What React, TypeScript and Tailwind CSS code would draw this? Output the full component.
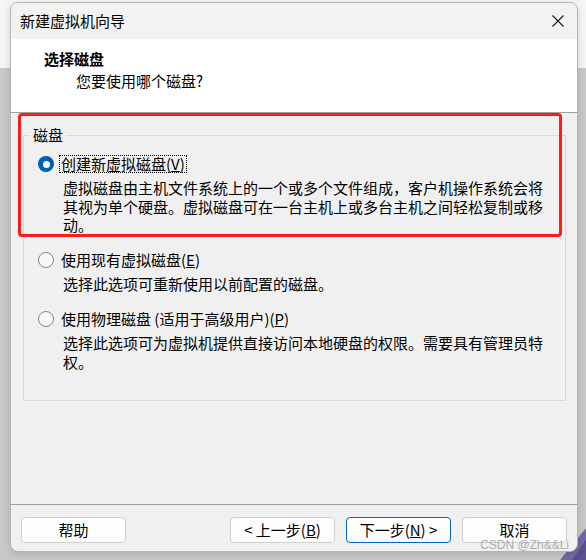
const font = "font-['Noto_Sans_CJK_SC',sans-serif]";

function Radio({ checked }: { checked?: boolean }) {
  if (checked) {
    return (
      <span className="flex h-[16px] w-[16px] shrink-0 items-center justify-center rounded-full bg-[#005fb8]">
        <span className="h-[7px] w-[7px] rounded-full bg-white" />
      </span>
    );
  }
  return <span className="h-[16px] w-[16px] shrink-0 rounded-full border border-[#858585] bg-[#f8f8f8]" />;
}

type OptionProps = {
  checked?: boolean;
  label: string;
  hotkey: string;
  desc: string;
  focused?: boolean;
  className?: string;
};

function Option({ checked, label, hotkey, desc, focused, className }: OptionProps) {
  return (
    <div className={className}>
      <div className="flex h-[18px] items-center gap-[5px]">
        <Radio checked={checked} />
        <span
          className={`px-[1px] leading-[16px] ${
            focused ? "border border-dotted border-black" : "border border-transparent"
          }`}
        >
          {label}(<u>{hotkey}</u>)
        </span>
      </div>
      <p className="ml-[25px] mt-[6px] w-[485px] leading-[18.5px]">{desc}</p>
    </div>
  );
}

function Button({ children, primary }: { children: React.ReactNode; primary?: boolean }) {
  return (
    <button
      className={`h-[26px] w-[105px] rounded-[4px] border bg-[#fdfdfd] text-[15px] leading-[24px] text-black ${
        primary ? "border-[#0067c0]" : "border-[#d0d0d0]"
      }`}
    >
      {children}
    </button>
  );
}

export default function App() {
  return (
    <div className={`relative flex h-[560px] w-[586px] flex-col overflow-hidden ${font} text-[15px] text-black`}>
      {/* desktop behind the dialog */}
      <div className="h-[68px] bg-[#f6f6f6]" />
      <div className="flex-1 bg-[#c9c9c9]" />
      <svg className="absolute bottom-0 right-0" width="40" height="40" viewBox="0 0 40 40">
        <polygon points="40,8 40,40 14,40" fill="#7467a6" />
        <polygon points="40,20 40,40 26,40" fill="#5c4f92" />
      </svg>

      {/* dialog window */}
      <div className="absolute left-[10px] top-[2px] flex h-[550px] w-[568px] flex-col overflow-hidden rounded-[8px] border border-[#b4b4b4] bg-[#f0f0f0] shadow-[0_2px_8px_rgba(0,0,0,0.15)]">
        <div className="flex h-[36px] items-center justify-between bg-[#f3f2f0] pl-[9px] pr-[13px]">
          <span className="leading-[20px]">新建虚拟机向导</span>
          <svg width="12" height="12" viewBox="0 0 12 12">
            <path d="M0.5 0.5 L11.5 11.5 M11.5 0.5 L0.5 11.5" stroke="#1a1a1a" strokeWidth="1.1" />
          </svg>
        </div>

        <div className="h-[74px] border-b border-[#a0a0a0] bg-white pl-[33px] pt-[10px]">
          <div className="font-bold leading-[20px]">选择磁盘</div>
          <div className="ml-[32px] mt-[2px] leading-[20px]">您要使用哪个磁盘?</div>
        </div>

        <div className="flex-1 pl-[12px] pr-[11px] pt-[13px]">
          <fieldset className="h-[275px] border border-[#d9d9d9] pl-[14px] pt-[11px]">
            <legend className="-ml-[8px] px-[3px] leading-[18px]">磁盘</legend>
            <Option
              checked
              focused
              label="创建新虚拟磁盘"
              hotkey="V"
              desc="虚拟磁盘由主机文件系统上的一个或多个文件组成，客户机操作系统会将其视为单个硬盘。虚拟磁盘可在一台主机上或多台主机之间轻松复制或移动。"
            />
            <Option
              className="mt-[16px]"
              label="使用现有虚拟磁盘"
              hotkey="E"
              desc="选择此选项可重新使用以前配置的磁盘。"
            />
            <Option
              className="mt-[17px]"
              label="使用物理磁盘 (适用于高级用户)"
              hotkey="P"
              desc="选择此选项可为虚拟机提供直接访问本地硬盘的权限。需要具有管理员特权。"
            />
          </fieldset>
        </div>

        <div className="flex h-[47px] items-start border-t border-[#a0a0a0] px-[10px] pt-[12px]">
          <Button>帮助</Button>
          <div className="flex-1" />
          <div className="flex gap-[11px]">
            <Button>
              &lt; 上一步(<u>B</u>)
            </Button>
            <Button primary>
              下一步(<u>N</u>) &gt;
            </Button>
            <Button>取消</Button>
          </div>
        </div>
      </div>

      {/* annotation box */}
      <div className="absolute left-[18px] top-[113px] h-[124px] w-[544px] rounded-[4px] border-[3px] border-[#fa1e16]" />

      {/* watermark */}
      <div className="absolute right-[17px] top-[538px] font-['Liberation_Sans',sans-serif] text-[12px] leading-[14px] text-[#9a9a9a]/80">
        CSDN @Zh&amp;&amp;Li
      </div>
    </div>
  );
}
